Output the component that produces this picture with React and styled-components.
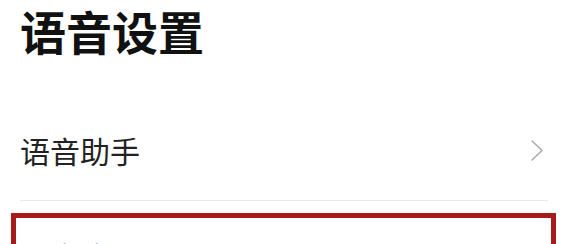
import styled, { createGlobalStyle } from "styled-components";

const GlobalStyle = createGlobalStyle`
  html, body {
    margin: 0;
    padding: 0;
    background: #fff;
  }
  body {
    font-family: "Noto Sans CJK SC", "Noto Sans", sans-serif;
    overflow: hidden;
  }
`;

const items = [
  { label: "语音助手" },
  { label: "语音唤醒", highlighted: true },
];

const Page = styled.div`
  width: 568px;
  height: 244px;
  overflow: hidden;
`;

const Title = styled.h1`
  margin: 3px 0 0;
  padding: 0 20px;
  font-size: 46px;
  line-height: 1.2;
  font-weight: 700;
  color: #111;
  letter-spacing: 0;
`;

const List = styled.ul`
  list-style: none;
  margin: 41px 0 0;
  padding: 0 20px;
`;

const Row = styled.li`
  position: relative;
  display: flex;
  align-items: center;
  justify-content: space-between;
  padding: ${({ highlighted }) => (highlighted ? "34px" : "30px")} 5px 29px 0;
  border-bottom: 1px solid #e9e9e9;

  ${({ highlighted }) =>
    highlighted &&
    `
    &::before {
      content: "";
      position: absolute;
      top: 12px;
      left: -9px;
      right: -8px;
      height: 120px;
      border: 5px solid #a81b1b;
      pointer-events: none;
    }
  `}
`;

const Label = styled.span`
  font-size: 30px;
  line-height: 1.4;
  color: #222;
`;

const Chevron = () => (
  <svg width="12" height="21" viewBox="0 0 12 21" fill="none">
    <polyline
      points="1,1 11,10.5 1,20"
      stroke="#a9a9a9"
      strokeWidth="1.5"
      strokeLinecap="round"
      strokeLinejoin="round"
    />
  </svg>
);

export default function App() {
  return (
    <Page>
      <GlobalStyle />
      <Title>语音设置</Title>
      <List>
        {items.map((item) => (
          <Row key={item.label} highlighted={item.highlighted}>
            <Label>{item.label}</Label>
            <Chevron />
          </Row>
        ))}
      </List>
    </Page>
  );
}
